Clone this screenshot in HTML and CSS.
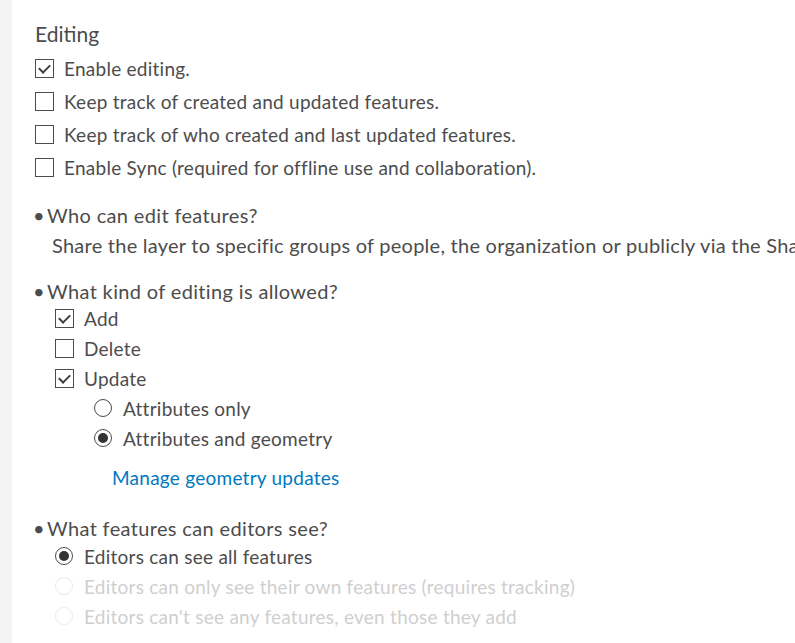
FILE: index.html
```html
<!DOCTYPE html>
<html>
<head>
	<title>Editing</title>
	<meta charset="UTF-8">
	<link rel="stylesheet" href="styles.css">
</head>
<body>
<div class="strip"></div>
<div class="panel">
	<h3 class="title">Editing</h3>
	<div class="checks">
		<label class="row"><span class="box on"></span>Enable editing.</label>
		<label class="row"><span class="box"></span>Keep track of created and updated features.</label>
		<label class="row"><span class="box"></span>Keep track of who created and last updated features.</label>
		<label class="row"><span class="box"></span>Enable Sync (required for offline use and collaboration).</label>
	</div>

	<div class="q">
		<div class="bullet">Who can edit features?</div>
		<p class="note">Share the layer to specific groups of people, the organization or publicly via the Share button on the item page.</p>
	</div>

	<div class="q">
		<div class="bullet">What kind of editing is allowed?</div>
		<div class="sub">
			<label class="row"><span class="box on"></span>Add</label>
			<label class="row"><span class="box"></span>Delete</label>
			<label class="row"><span class="box on"></span>Update</label>
			<div class="sub">
				<label class="row"><span class="radio"></span>Attributes only</label>
				<label class="row"><span class="radio on"></span>Attributes and geometry</label>
				<a class="link" href="javascript:;">Manage geometry updates</a>
			</div>
		</div>
	</div>

	<div class="q last">
		<div class="bullet">What features can editors see?</div>
		<div class="sub">
			<label class="row"><span class="radio on"></span>Editors can see all features</label>
			<label class="row off"><span class="radio"></span>Editors can only see their own features (requires tracking)</label>
			<label class="row off"><span class="radio"></span>Editors can't see any features, even those they add</label>
		</div>
	</div>
</div>
</body>
</html>
```

FILE: styles.css
```css
html, body { margin: 0; height: 100%; background: #fff; }
body { display: flex; overflow: hidden; font-family: Lato, "Open Sans", sans-serif; font-size: 19px; letter-spacing: 0.25px; color: #4c4c4c; }
.strip { width: 12px; flex: none; background: #f3f3f3; }
.panel { flex: 1; min-width: 0; padding: 21px 0 0 23px; white-space: nowrap; }
.title { margin: 0 0 5px; font-size: 21px; font-weight: normal; line-height: 26px; letter-spacing: 0; }
.checks .row { height: 33px; }
.row { display: flex; align-items: center; gap: 10px; cursor: pointer; }
.box { width: 17px; height: 17px; border: 1px solid #4c4c4c; flex: none; position: relative; }
.box.on::after { content: ""; position: absolute; left: 5px; top: 2px; width: 5px; height: 9px; border: solid #3c3c3c; border-width: 0 2px 2px 0; transform: rotate(45deg); }
.radio { width: 16px; height: 16px; border: 1px solid #4c4c4c; border-radius: 50%; flex: none; position: relative; margin-right: 1px; }
.radio.on::after { content: ""; position: absolute; left: 3px; top: 3px; width: 10px; height: 10px; border-radius: 50%; background: #333; }
.q { margin-top: 17px; }
.q.last { margin-top: 21px; }
.bullet { font-size: 20px; letter-spacing: 0.35px; line-height: 28px; }
.bullet::before { content: "\2022"; display: inline-block; width: 14px; margin-left: -2px; letter-spacing: 0; }
.note { margin: 1px 0 0 17px; font-size: 20px; line-height: 30px; }
.q .sub { padding-left: 20px; margin-top: -2px; }
.q.last .sub { margin-top: -1px; }
.q .sub .row { height: 30px; }
.q .sub .sub { padding-left: 39px; margin-top: 0; }
.link { display: block; color: #0079c1; text-decoration: none; margin: 10px 0 0 18px; line-height: 30px; }
.row.off { color: #cfcfcf; cursor: default; }
.row.off .radio { border-color: #eaeaea; }
```
